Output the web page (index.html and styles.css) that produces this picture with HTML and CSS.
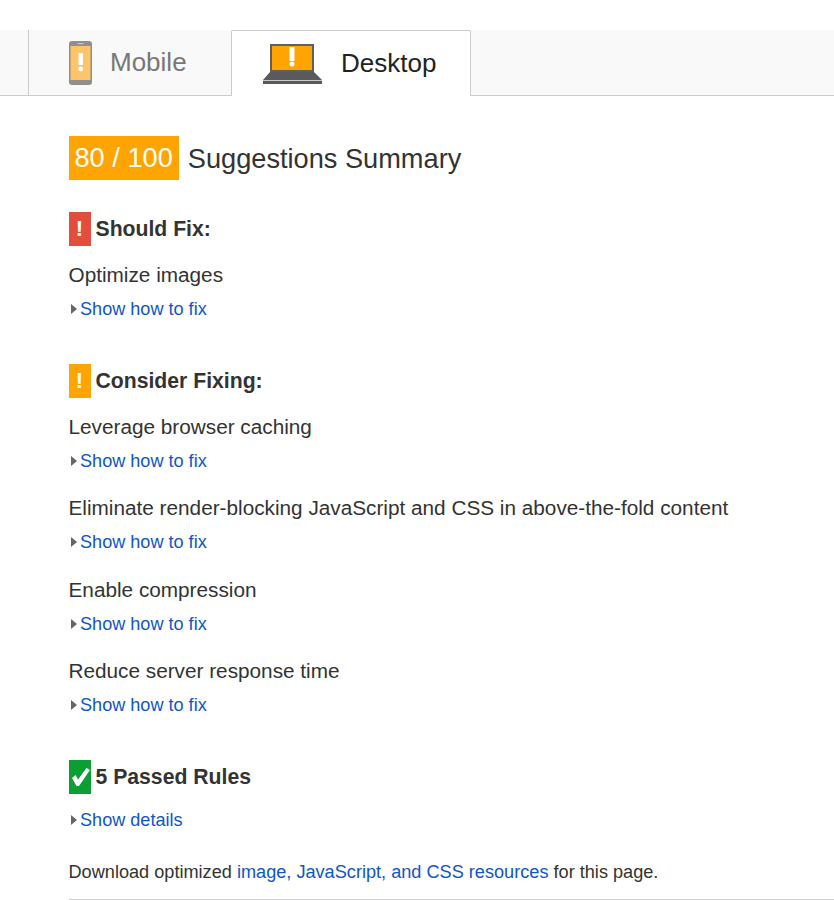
FILE: index.html
```html
<!DOCTYPE html>
<html lang="en">
<head>
    <meta charset="UTF-8">
    <meta name="viewport" content="width=device-width, initial-scale=1.0">
    <title>Suggestions Summary</title>
    <link rel="stylesheet" href="styles.css">
</head>
<body>

    <!-- Tabs -->
    <div class="tabs">
        <div class="tab tab-mobile">
            <svg class="tab-icon" width="23" height="44" viewBox="0 0 23 44">
                <rect x="0" y="0" width="23" height="44" rx="3" fill="#8f8f8f"/>
                <rect x="1.5" y="5" width="20" height="34" fill="#fdc468"/>
                <rect x="8.5" y="2" width="6" height="1.2" fill="#c8c8c8"/>
                <rect x="9.5" y="12" width="4.5" height="12" fill="#fff"/>
                <circle cx="11.75" cy="28" r="2.4" fill="#fff"/>
            </svg>
            <span>Mobile</span>
        </div>
        <div class="tab tab-desktop">
            <svg class="tab-icon" width="60" height="40" viewBox="0 0 60 40">
                <rect x="7" y="0" width="44" height="28" fill="#5f5f5f"/>
                <rect x="9" y="2" width="40" height="24" fill="#ffa400"/>
                <rect x="26.5" y="3" width="5" height="14" fill="#fff"/>
                <circle cx="29" cy="20" r="2.5" fill="#fff"/>
                <path d="M7 28H51L59 36V40H0V36Z" fill="#5a5a5a"/>
                <rect x="0" y="36" width="59" height="1" fill="#c9c9c9"/>
            </svg>
            <span>Desktop</span>
        </div>
    </div>

    <div class="content">
        <!-- Score -->
        <div class="summary">
            <span class="score">80 / 100</span>
            <span class="summary-title">Suggestions Summary</span>
        </div>

        <!-- Should fix -->
        <section class="section">
            <h3 class="section-title">
                <span class="badge badge-red">!</span>
                Should Fix:
            </h3>
            <div class="rule">
                <p class="rule-name">Optimize images</p>
                <a class="fix-link" href="#">Show how to fix</a>
            </div>
        </section>

        <!-- Consider fixing -->
        <section class="section">
            <h3 class="section-title">
                <span class="badge badge-orange">!</span>
                Consider Fixing:
            </h3>
            <div class="rule">
                <p class="rule-name">Leverage browser caching</p>
                <a class="fix-link" href="#">Show how to fix</a>
            </div>
            <div class="rule">
                <p class="rule-name">Eliminate render-blocking JavaScript and CSS in above-the-fold content</p>
                <a class="fix-link" href="#">Show how to fix</a>
            </div>
            <div class="rule">
                <p class="rule-name">Enable compression</p>
                <a class="fix-link" href="#">Show how to fix</a>
            </div>
            <div class="rule">
                <p class="rule-name">Reduce server response time</p>
                <a class="fix-link" href="#">Show how to fix</a>
            </div>
        </section>

        <!-- Passed -->
        <h3 class="section-title section-title-passed">
            <span class="badge badge-green">
                <svg width="22" height="24" viewBox="0 0 22 24">
                    <path d="M3 13L6.5 10L9 14.5L17.5 3L21 5L10 21H7.5Z" fill="#fff"/>
                </svg>
            </span>
            5 Passed Rules
        </h3>
        <a class="fix-link" href="#">Show details</a>

        <p class="download">Download optimized <a href="#">image, JavaScript, and CSS resources</a> for this page.</p>
    </div>

</body>
</html>
```

FILE: styles.css
```css
body {
    margin: 0;
    padding: 30px 0 0;
    background-color: white;
    color: #333;
    font-family: "Liberation Sans", Arial, sans-serif;
}

/* Tabs */
.tabs {
    display: flex;
    height: 66px;
    box-sizing: border-box;
    padding-left: 28px;
    background-color: #f9f9f9;
    border-bottom: 1px solid #ccc;
}

.tab {
    display: flex;
    align-items: center;
    font-size: 26px;
}

.tab-mobile {
    width: 203px;
    box-sizing: border-box;
    padding-left: 40px;
    border-left: 1px solid #ccc;
    color: #777;
}

.tab-mobile span {
    margin-left: 18px;
}

.tab-desktop {
    width: 240px;
    height: 66px;
    box-sizing: border-box;
    padding-left: 31px;
    background-color: white;
    border: 1px solid #ccc;
    border-bottom: none;
    border-radius: 2px 2px 0 0;
    color: #222;
}

.tab-desktop span {
    margin-left: 18px;
}

/* Contenido */
.content {
    padding: 40px 0 0 68.5px;
}

.summary {
    display: flex;
    align-items: center;
    font-size: 27.2px;
    margin-bottom: 31.5px;
}

.score {
    padding: 0 6px;
    height: 44px;
    line-height: 44px;
    margin-right: 9px;
    background-color: #ffa400;
    color: white;
}

.summary-title {
    padding-top: 2px;
}

.section {
    margin-bottom: 41px;
}

.section-title {
    display: flex;
    align-items: center;
    height: 34px;
    margin: 0 0 15px;
    font-size: 21.2px;
    font-weight: bold;
}

.section-title-passed {
    margin-bottom: 11.5px;
}

.badge {
    display: flex;
    align-items: center;
    justify-content: center;
    width: 22px;
    height: 34px;
    margin-right: 5px;
    color: white;
    font-size: 22px;
}

.badge-red {
    background-color: #e24d3c;
}

.badge-orange {
    background-color: #ffa400;
}

.badge-green {
    background-color: #0a9e33;
}

.rule {
    margin-bottom: 19.67px;
}

.rule:last-child {
    margin-bottom: 0;
}

.rule-name {
    margin: 0 0 6px;
    font-size: 20.75px;
    line-height: 28px;
}

.fix-link {
    position: relative;
    display: block;
    padding-left: 11.5px;
    font-size: 18.1px;
    line-height: 28px;
    color: #1155cc;
    text-decoration: none;
}

.fix-link::before {
    content: "";
    position: absolute;
    left: 2.5px;
    top: 9px;
    border-left: 6px solid #666;
    border-top: 5px solid transparent;
    border-bottom: 5px solid transparent;
}

.download {
    margin: 24px 0 0;
    padding-bottom: 13px;
    border-bottom: 2px solid #ccc;
    font-size: 18.15px;
    line-height: 28px;
}

.download a {
    color: #1155cc;
    text-decoration: none;
}
```
